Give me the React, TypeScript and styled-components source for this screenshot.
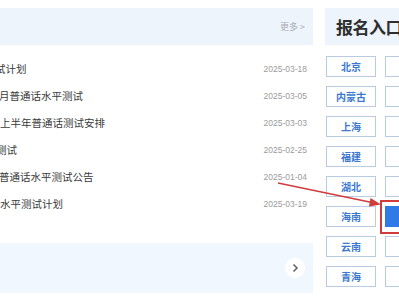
import React from "react";
import styled, { createGlobalStyle } from "styled-components";

const HeadBlue = "#edf4fc";
const BoxBlue = "#f1f7fe";
const BtnBorder = "#b9cbe0";
const BtnText = "#3b78cf";
const FillBlue = "#2f7ae6";
const MarkRed = "#d23b3b";

const GlobalStyle = createGlobalStyle`
  html, body {
    margin: 0;
    padding: 0;
    background: #ffffff;
    overflow: hidden;
    font-family: "Noto Sans CJK SC", "Noto Sans", sans-serif;
  }
`;

const Page = styled.div`
  position: relative;
  display: flex;
  gap: 12px;
  width: 399px;
  height: 300px;
  padding-top: 8px;
  box-sizing: border-box;
  overflow: hidden;
`;

const NewsPanel = styled.div`
  flex: 0 0 313px;
  display: flex;
  flex-direction: column;
`;

const NewsHead = styled.div`
  height: 37px;
  background: ${HeadBlue};
  display: flex;
  align-items: center;
  justify-content: flex-end;
  padding-right: 8px;
`;

const More = styled.span`
  font-size: 9px;
  color: #a9adb3;
`;

const NewsList = styled.ul`
  list-style: none;
  margin: 10px 0 0;
  padding: 0;
`;

const NewsRow = styled.li`
  height: 27px;
  display: flex;
  align-items: center;
  justify-content: space-between;
  padding-right: 6px;
`;

const Title = styled.span<{ $shift: number }>`
  font-size: 10.5px;
  color: #3a3a3a;
  white-space: nowrap;
  margin-left: ${(p) => p.$shift}px;
`;

const Date = styled.span`
  font-family: "Liberation Sans", Arial, sans-serif;
  font-size: 8.5px;
  color: #9b9b9b;
`;

const MoreBox = styled.div`
  margin-top: 26px;
  height: 50px;
  background: ${BoxBlue};
  display: flex;
  align-items: center;
  justify-content: flex-end;
  padding-right: 8px;
`;

const RoundBtn = styled.div`
  width: 20px;
  height: 20px;
  border-radius: 50%;
  background: #ffffff;
  display: flex;
  align-items: center;
  justify-content: center;
`;

const EntryPanel = styled.div`
  flex: 0 0 170px;
  display: flex;
  flex-direction: column;
`;

const EntryHead = styled.div`
  height: 37px;
  background: ${HeadBlue};
  display: flex;
  align-items: center;
  padding-left: 11px;
  font-size: 17px;
  font-weight: 700;
  color: #2e2e2e;
  letter-spacing: -0.5px;
`;

const Grid = styled.div`
  display: grid;
  grid-template-columns: 50px 50px;
  grid-auto-rows: 21px;
  column-gap: 9px;
  row-gap: 9px;
  margin-top: 11px;
  padding-left: 1px;
`;

const Region = styled.div<{ $active?: boolean }>`
  box-sizing: border-box;
  border: 1px solid ${(p) => (p.$active ? FillBlue : BtnBorder)};
  background: ${(p) => (p.$active ? FillBlue : "#ffffff")};
  color: ${BtnText};
  font-size: 10px;
  font-weight: 700;
  display: flex;
  align-items: center;
  justify-content: center;
`;

const Mark = styled.div`
  position: absolute;
  left: 380px;
  top: 200px;
  width: 40px;
  height: 34px;
  border: 2px solid ${MarkRed};
  box-sizing: border-box;
`;

const Arrow = styled.svg`
  position: absolute;
  left: 0;
  top: 0;
  pointer-events: none;
`;

const news = [
  { title: "试计划", shift: -5, date: "2025-03-18" },
  { title: "月普通话水平测试", shift: -1, date: "2025-03-05" },
  { title: "上半年普通话测试安排", shift: 0, date: "2025-03-03" },
  { title: "测试", shift: -4, date: "2025-02-25" },
  { title: "普通话水平测试公告", shift: -1, date: "2025-01-04" },
  { title: "水平测试计划", shift: 0, date: "2025-03-19" },
];

const regions = ["北京", "内蒙古", "上海", "福建", "湖北", "海南", "云南", "青海"];

export default function App() {
  return (
    <>
      <GlobalStyle />
      <Page>
        <NewsPanel>
          <NewsHead>
            <More>更多 &gt;</More>
          </NewsHead>
          <NewsList>
            {news.map((n) => (
              <NewsRow key={n.date + n.title}>
                <Title $shift={n.shift}>{n.title}</Title>
                <Date>{n.date}</Date>
              </NewsRow>
            ))}
          </NewsList>
          <MoreBox>
            <RoundBtn>
              <svg width="10" height="10" viewBox="0 0 10 10">
                <path d="M3.5 1.5 L7 5 L3.5 8.5" fill="none" stroke="#666" strokeWidth="1.6" />
              </svg>
            </RoundBtn>
          </MoreBox>
        </NewsPanel>
        <EntryPanel>
          <EntryHead>报名入口</EntryHead>
          <Grid>
            {regions.map((r, i) => (
              <React.Fragment key={r}>
                <Region>{r}</Region>
                <Region $active={i === 5} />
              </React.Fragment>
            ))}
          </Grid>
        </EntryPanel>
        <Mark />
        <Arrow width="399" height="300" viewBox="0 0 399 300">
          <line x1="278" y1="183" x2="372" y2="202.5" stroke={MarkRed} strokeWidth="1.5" />
          <path d="M381 204.5 L370.5 198 L369 206.5 Z" fill={MarkRed} />
        </Arrow>
      </Page>
    </>
  );
}
